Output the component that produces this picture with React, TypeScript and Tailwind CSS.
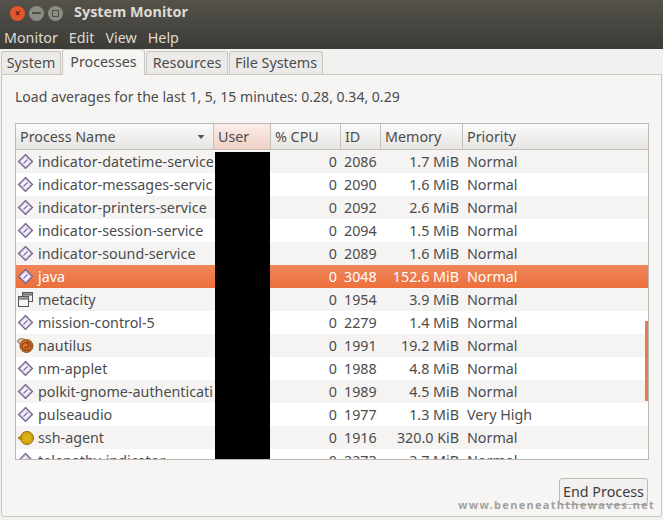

const rows: [string, string, string, string, string, string][] = [
  ["diamond", "indicator-datetime-service", "0", "2086", "1.7 MiB", "Normal"],
  ["diamond", "indicator-messages-service", "0", "2090", "1.6 MiB", "Normal"],
  ["diamond", "indicator-printers-service", "0", "2092", "2.6 MiB", "Normal"],
  ["diamond", "indicator-session-service", "0", "2094", "1.5 MiB", "Normal"],
  ["diamond", "indicator-sound-service", "0", "2089", "1.6 MiB", "Normal"],
  ["diamond", "java", "0", "3048", "152.6 MiB", "Normal"],
  ["window", "metacity", "0", "1954", "3.9 MiB", "Normal"],
  ["diamond", "mission-control-5", "0", "2279", "1.4 MiB", "Normal"],
  ["nautilus", "nautilus", "0", "1991", "19.2 MiB", "Normal"],
  ["diamond", "nm-applet", "0", "1988", "4.8 MiB", "Normal"],
  ["diamond", "polkit-gnome-authentication-agent", "0", "1989", "4.5 MiB", "Normal"],
  ["diamond", "pulseaudio", "0", "1977", "1.3 MiB", "Very High"],
  ["ssh", "ssh-agent", "0", "1916", "320.0 KiB", "Normal"],
  ["diamond", "telepathy-indicator", "0", "2273", "2.7 MiB", "Normal"],
];

function Icon({ kind }: { kind: string }) {
  if (kind === "window")
    return (
      <svg width="17" height="17" viewBox="0 0 17 17" className="shrink-0">
        <rect x="5.5" y="1.5" width="10" height="9" fill="#eee" stroke="#555" />
        <rect x="5.5" y="1.5" width="10" height="2.5" fill="#999" stroke="#555" />
        <rect x="1.5" y="5.5" width="10" height="10" fill="#f4f4f4" stroke="#555" />
        <rect x="1.5" y="5.5" width="10" height="2.5" fill="#aaa" stroke="#555" />
      </svg>
    );
  if (kind === "nautilus")
    return (
      <svg width="17" height="17" viewBox="0 0 17 17" className="shrink-0">
        <path d="M0.5 4 C1.5 1.5 5 1 8 2.5 L5 8 C3 7.5 1 6 0.5 4 Z" fill="#d8c6a8" stroke="#6b4a2a" strokeWidth="0.8" />
        <circle cx="9.5" cy="9" r="6.5" fill="#d9742b" stroke="#6d3d14" strokeWidth="0.8" />
        <path d="M9.5 4.5 A4.5 4.5 0 1 1 5 9 A3.2 3.2 0 0 1 9.5 6 A2.4 2.4 0 1 1 7.5 10" fill="none" stroke="#8f430f" strokeWidth="1.3" />
      </svg>
    );
  if (kind === "ssh")
    return (
      <svg width="17" height="17" viewBox="0 0 17 17" className="shrink-0">
        <circle cx="10" cy="9" r="6.5" fill="#d4a80e" stroke="#8a6c08" />
        <path d="M1 8 L5 7 L5 11 L1 10 Z" fill="#a98610" />
        <circle cx="10" cy="9" r="3.5" fill="#dcb41a" />
      </svg>
    );
  return (
    <svg width="17" height="17" viewBox="0 0 17 17" className="shrink-0">
      <path d="M8.5 1.5 L15.5 8.5 L8.5 15.5 L1.5 8.5 Z" fill="#dcd2ea" stroke="#6f5f88" strokeWidth="1.2" />
      <path d="M8.5 4.2 L12.8 8.5 L8.5 12.8 L4.2 8.5 Z" fill="#f7f4fb" />
      <path d="M6.5 10.5 L10.5 6.5" stroke="#7d6a99" strokeWidth="1.1" />
    </svg>
  );
}

function Head({ w, children, active }: { w: string; children?: React.ReactNode; active?: boolean }) {
  return (
    <div
      className={`${w} shrink-0 h-full flex items-center pl-[4px] border-r border-[#c4c0bb] ${
        active ? "bg-gradient-to-b from-[#fbeee9] to-[#efcfc4]" : ""
      }`}
    >
      {children}
    </div>
  );
}

export default function App() {
  return (
    <div
      className="w-[663px] h-[520px] overflow-hidden relative bg-[#f2f1f0] text-[#4c4c4c] text-[14.3px] flex flex-col"
      style={{ fontFamily: '"Noto Sans", "Open Sans", sans-serif' }}
    >
      <div className="h-[49px] shrink-0 bg-gradient-to-b from-[#55524b] to-[#3c3b37] flex flex-col">
        <div className="h-[26px] flex items-center pl-[10px]">
          <div className="w-[15px] h-[15px] rounded-full bg-[#e2562c] text-[#5a2010] flex items-center justify-center text-[10px] font-bold leading-none">×</div>
          <div className="w-[15px] h-[15px] rounded-full bg-[#8b8a83] ml-[4px] flex items-center justify-center">
            <div className="w-[9px] h-[2px] bg-[#4e4d48]" />
          </div>
          <div className="w-[15px] h-[15px] rounded-full bg-[#8b8a83] ml-[4px] flex items-center justify-center">
            <div className="w-[7px] h-[7px] border border-[#4e4d48]" />
          </div>
          <span className="ml-[11px] -mt-[3px] text-[#dfdbd2] font-bold text-[14.4px]">System Monitor</span>
        </div>
        <div className="h-[23px] flex items-center pl-[4px] gap-[11px] text-[#dfdbd2]">
          <span>Monitor</span>
          <span>Edit</span>
          <span>View</span>
          <span>Help</span>
        </div>
      </div>

      <div className="h-[25px] shrink-0 flex items-end pl-[1px] relative z-10">
        <div className="h-[23px] w-[60px] flex items-center justify-center bg-[#ebeae8] border border-b-0 border-[#c9c6c1] rounded-t-[3px]">System</div>
        <div className="h-[26px] w-[83px] ml-[1px] -mb-[1px] pb-[2px] flex items-center justify-center bg-[#f6f5f4] border border-b-0 border-[#c9c6c1] rounded-t-[3px]">Processes</div>
        <div className="h-[23px] w-[82px] ml-[1px] flex items-center justify-center bg-[#ebeae8] border border-b-0 border-[#c9c6c1] rounded-t-[3px]">Resources</div>
        <div className="h-[23px] w-[94px] ml-[1px] flex items-center justify-center bg-[#ebeae8] border border-b-0 border-[#c9c6c1] rounded-t-[3px]">File Systems</div>
      </div>

      <div className="h-[443px] shrink-0 mx-px bg-[#f6f5f4] border border-[#c9c6c1] rounded-b-[3px] flex flex-col pl-[13px]">
        <div className="h-[48px] shrink-0 flex items-center pb-[5px] text-[14.05px]">
          Load averages for the last 1, 5, 15 minutes: 0.28, 0.34, 0.29
        </div>
        <div className="h-[337px] w-[634px] shrink-0 border border-[#bdb9b4] bg-white flex flex-col overflow-hidden relative">
          <div className="h-[26px] shrink-0 flex bg-gradient-to-b from-[#fafafa] to-[#e6e5e3] border-b border-[#c4c0bb]">
            <Head w="w-[198px]">
              <span className="flex-1">Process Name</span>
              <svg width="8" height="6" viewBox="0 0 8 6" className="mr-[8px]"><path d="M0.5 1 L7.5 1 L4 5 Z" fill="#555" /></svg>
            </Head>
            <Head w="w-[57px]" active>User</Head>
            <Head w="w-[70px]">% CPU</Head>
            <Head w="w-[40px]">ID</Head>
            <Head w="w-[82px]">Memory</Head>
            <div className="flex-1 flex items-center pl-[4px]">Priority</div>
          </div>
          <div className="flex-1 overflow-hidden">
            {rows.map((r, i) => {
              const sel = r[1] === "java";
              return (
                <div
                  key={r[3]}
                  className={`h-[23px] flex items-center ${
                    sel ? "bg-gradient-to-b from-[#f0865a] to-[#ec6f3c] text-white" : i % 2 === 0 ? "bg-[#f5f4f3]" : "bg-white"
                  }`}
                >
                  <div className="w-[197px] mr-[2px] shrink-0 flex items-center pl-[1px] gap-[4px] overflow-hidden whitespace-nowrap">
                    <Icon kind={r[0]} />
                    <span>{r[1]}</span>
                  </div>
                  <div className={`w-[55px] shrink-0 bg-black self-end ${i === 0 ? "h-[21px]" : "h-[23px]"}`} />
                  <div className="w-[67px] shrink-0 text-right">{r[2]}</div>
                  <div className="w-[47px] shrink-0 pl-[7px]">{r[3]}</div>
                  <div className="w-[75px] shrink-0 text-right">{r[4]}</div>
                  <div className="flex-1 pl-[8px]">{r[5]}</div>
                </div>
              );
            })}
          </div>
          <div className="absolute right-0 top-[197px] w-[3px] h-[80px] bg-[#e08050]" />
        </div>
        <div className="flex-1 flex justify-end items-end pb-[11px]">
          <button className="h-[27px] w-[89px] mr-[13px] border border-[#bdb9b4] rounded-[3px] bg-[#f2f1f0] text-[#3c3c3c] flex items-center justify-center">
            End Process
          </button>
        </div>
      </div>

      <span className="absolute left-[458px] top-[497px] text-[11px] font-bold tracking-[1.3px] text-[#8a8a8a]/80 whitespace-nowrap">
        www.beneneaththewaves.net
      </span>
    </div>
  );
}
